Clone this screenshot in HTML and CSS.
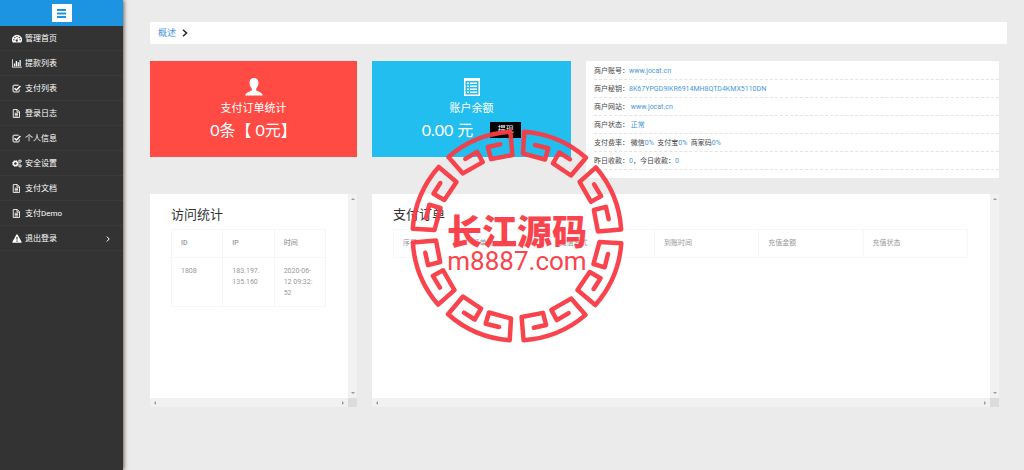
FILE: index.html
```html
<!DOCTYPE html>
<html lang="zh-CN">
<head>
<meta charset="utf-8">
<title>管理首页</title>
<link rel="stylesheet" href="styles.css">
</head>
<body>
<svg class="defs" aria-hidden="true">
  <symbol id="i-dash" viewBox="0 0 16 14"><path fill-rule="evenodd" d="M8 1a8 8 0 0 0-6.700 12.400h13.400A8 8 0 0 0 8 1zM3 7.800a1.100 1.100 0 1 1 0 2.200 1.100 1.100 0 0 1 0-2.200zM4.600 4.200a1.100 1.100 0 1 1 0 2.200 1.100 1.100 0 0 1 0-2.200zM8 2.700a1.100 1.100 0 1 1 0 2.200 1.100 1.100 0 0 1 0-2.200zM11.800 4.200a1.100 1.100 0 1 1 0 2.200 1.100 1.100 0 0 1 0-2.200zM13 7.800a1.100 1.100 0 1 1 0 2.200 1.100 1.100 0 0 1 0-2.200zM9.200 5.500l-.7 3.500a1.700 1.700 0 1 1-1.100-.3z"/></symbol>
  <symbol id="i-chart" viewBox="0 0 16 14"><path d="M0 0h1.200v12.300H16v1.200H0zM3 7h2v4.300H3zM6 3h2v8.300H6zM9 5h2v6.300H9zM12 1.500h2v9.800h-2z"/></symbol>
  <symbol id="i-check" viewBox="0 0 16 14"><path d="M11.500 8.500v2.700a1.300 1.300 0 0 1-1.300 1.300H3a1.300 1.300 0 0 1-1.300-1.300V3A1.300 1.300 0 0 1 3 1.700h7.500" fill="none" stroke="currentColor" stroke-width="1.600"/><path d="M4 6.500l3 3 6.500-6.500" fill="none" stroke="currentColor" stroke-width="2.400"/></symbol>
  <symbol id="i-file" viewBox="0 0 16 14"><path d="M2 .7h6.500L12 4.200v9.100H2zM8 .7v4h4M4.300 6.500h5.400M4.300 8.700h5.400M4.300 10.900h5.400" fill="none" stroke="currentColor" stroke-width="1.400"/></symbol>
  <symbol id="i-cogs" viewBox="0 0 16 14"><g fill="none" stroke="currentColor"><circle cx="5.500" cy="7" r="3.200" stroke-width="2.400"/><circle cx="5.500" cy="7" r="4.800" stroke-width="1.400" stroke-dasharray="1.900 1.870"/><circle cx="12.700" cy="3.400" r="1.700" stroke-width="1.400"/><circle cx="12.700" cy="3.400" r="2.700" stroke-width="1" stroke-dasharray="1.200 1.620"/><circle cx="12.700" cy="10.700" r="1.700" stroke-width="1.400"/><circle cx="12.700" cy="10.700" r="2.700" stroke-width="1" stroke-dasharray="1.200 1.620"/></g></symbol>
  <symbol id="i-warn" viewBox="0 0 16 14"><path fill-rule="evenodd" d="M7.100.6a1 1 0 0 1 1.800 0l6.400 11.700a1 1 0 0 1-.9 1.500H1.600a1 1 0 0 1-.9-1.500zM7 4.500l.3 4.500h1.400L9 4.500zM7 10.100v1.900h2v-1.900z"/></symbol>
</svg>
<div class="app">
  <aside class="sidebar">
    <div class="brand"><button class="toggle" type="button" aria-label="菜单"><svg viewBox="0 0 9 9"><path d="M0 0h9v2H0zM0 3.500h9v2H0zM0 7h9v2H0z"/></svg></button></div>
    <nav class="menu">
      <a href="#"><svg><use href="#i-dash"/></svg>管理首页</a>
      <a href="#"><svg><use href="#i-chart"/></svg>提款列表</a>
      <a href="#"><svg><use href="#i-check"/></svg>支付列表</a>
      <a href="#"><svg><use href="#i-file"/></svg>登录日志</a>
      <a href="#"><svg><use href="#i-check"/></svg>个人信息</a>
      <a href="#"><svg><use href="#i-cogs"/></svg>安全设置</a>
      <a href="#"><svg><use href="#i-file"/></svg>支付文档</a>
      <a href="#"><svg><use href="#i-file"/></svg>支付Demo</a>
      <a href="#"><svg><use href="#i-warn"/></svg>退出登录<svg class="caret" viewBox="0 0 4 6"><path d="M.8.5 3.200 3 .8 5.500"/></svg></a>
    </nav>
  </aside>
  <main class="main">
    <div class="crumb"><a href="#">概述</a><svg viewBox="0 0 6 8"><path d="M1 .7 4.500 4 1 7.300"/></svg></div>
    <div class="grid">
      <section class="card red">
        <svg class="big" viewBox="0 0 18 18"><path d="M9 0c2.800 0 4.500 1.900 4.500 4.800 0 2.400-1 4.600-2.300 5.700v1.700c.3 1 6.600 2 6.600 5.300H.2c0-3.300 6.300-4.300 6.600-5.300v-1.700C5.500 9.400 4.500 7.200 4.500 4.800 4.500 1.900 6.200 0 9 0z"/></svg>
        <h3>支付订单统计</h3>
        <p>0条【 0元】</p>
      </section>
      <section class="card blue">
        <svg class="big" viewBox="0 0 18 18"><path fill-rule="evenodd" d="M1 0h16v18H1zM2.500 3v13.500h13V3zM4 4.500h2V6H4zM7 4.500h7V6H7zM4 7.500h2V9H4zM7 7.500h7V9H7zM4 10.500h2V12H4zM7 10.500h7V12H7zM4 13.500h2V15H4zM7 13.500h7V15H7z"/></svg>
        <h3>账户余额</h3>
        <p>0.00 元<button type="button">提现</button></p>
      </section>
      <section class="info">
        <div>商户账号：<a href="#">www.jocat.cn</a></div>
        <div>商户秘钥：<a href="#">8K67YPGD9IKR6914MH8QTD4KMX5110DN</a></div>
        <div>商户网站：&nbsp;<a href="#">www.jocat.cn</a></div>
        <div>商户状态：&nbsp;<b>正常</b></div>
        <div>支付费率：&nbsp;微信<b>0%</b>&nbsp; 支付宝<b>0%</b>&nbsp; 商家码<b>0%</b></div>
        <div>昨日收款：<b>0</b>，今日收款：<b>0</b></div>
      </section>
      <section class="panel">
        <div class="content">
          <h2>访问统计</h2>
          <table class="visits">
            <thead><tr><th>ID</th><th>IP</th><th>时间</th></tr></thead>
            <tbody><tr><td>1808</td><td>183.197.<br>135.160</td><td>2020-06-<br>12 09:32:<br>52</td></tr></tbody>
          </table>
        </div>
        <div class="vbar"><i class="up"></i><i class="down"></i></div>
        <div class="hbar"><i class="left"></i><i class="right"></i></div>
        <div class="corner"></div>
      </section>
      <section class="panel wide">
        <div class="content">
          <h2>支付订单</h2>
          <table class="orders">
            <colgroup><col class="c1"><col class="c2"><col class="c3"><col class="c4"><col class="c4"><col class="c4"></colgroup>
            <thead><tr><th>序号</th><th>订单号</th><th>充值方式</th><th>到账时间</th><th>充值金额</th><th>充值状态</th></tr></thead>
          </table>
        </div>
        <div class="vbar"><i class="up"></i><i class="down"></i></div>
        <div class="hbar"><i class="left"></i><i class="right"></i></div>
        <div class="corner"></div>
      </section>
    </div>
  </main>
</div>
<div class="stamp">
  <svg viewBox="-108 -108 216 216">
    <path id="seg" d="M18-91 31.300-87.700 28-76.500 6-82.500 7.300-104.300A104.600 104.600 0 0 1 69-78.300L54-60.500 36-72.700 42.300-83.500 53-76.700"/>
    <use href="#seg" transform="rotate(45)"/><use href="#seg" transform="rotate(90)"/><use href="#seg" transform="rotate(135)"/><use href="#seg" transform="rotate(180)"/><use href="#seg" transform="rotate(225)"/><use href="#seg" transform="rotate(270)"/><use href="#seg" transform="rotate(315)"/>
  </svg>
  <div class="words"><strong>长江源码</strong><span>m8887.com</span></div>
</div>
</body>
</html>
```
FILE: styles.css
```css
* { box-sizing: border-box; }
body { margin: 0; background: #ebebeb; color: #444; font: 8px/11px Roboto, "Noto Sans CJK SC", sans-serif; }
a { color: #4a98dc; text-decoration: none; }
h2, h3, p { margin: 0; font-weight: 400; }
.defs { display: none; }
.app { display: flex; min-height: 100vh; }

.sidebar { flex: 0 0 123px; background: #333; box-shadow: 1px 0 4px #6b5a55; }
.brand { display: flex; justify-content: center; align-items: center; height: 26px; background: #1c94e2; }
.toggle { display: grid; place-items: center; width: 20px; height: 18px; padding: 0; border: 0; background: #fff; }
.toggle svg { width: 9px; height: 9px; fill: #1c94e2; }
.menu a { display: flex; align-items: center; height: 25px; padding: 1px 13px 0 12px; border-bottom: 1px solid #3a3a3a; color: #fff; }
.menu svg { width: 10px; height: 9px; margin-right: 3px; fill: currentColor; }
.menu .caret { width: 4px; height: 6px; margin: 0 0 0 auto; fill: none; stroke: #fff; }

.main { flex: 1; padding: 22px 17px 0 27px; }
.crumb { display: flex; align-items: center; gap: 6px; height: 22px; padding: 0 8px; background: #fff; font-size: 9px; }
.crumb svg { width: 6px; height: 8px; fill: none; stroke: #222; stroke-width: 1.500; }
.grid { display: grid; grid-template-columns: 207fr 199fr 413fr; column-gap: 15px; row-gap: 16px; margin: 17px 8px 0 0; align-items: start; }

.card { display: flex; flex-direction: column; align-items: center; height: 96px; padding-top: 17px; color: #fff; }
.red { background: #ff4b44; }
.blue { background: #23bef0; }
.big { width: 18px; height: 18px; fill: #fff; }
.card h3 { margin-top: 5px; font-size: 11px; line-height: 16px; }
.card p { display: flex; align-items: center; margin-top: 1px; font: 16px/24px Lato, "Noto Sans CJK SC", sans-serif; }
.card button { width: 31px; height: 16px; margin-left: 17px; padding: 0; border: 0; background: #000; color: #fff; font: 8px/16px Roboto, "Noto Sans CJK SC", sans-serif; }

.info { padding: 1px 0 8px 8px; background: #fff; font-size: 7px; }
.info div { height: 18px; padding-top: 1px; line-height: 17px; border-bottom: 1px dashed #e4e4e4; }
.info b { color: #4a98dc; font-weight: 400; }

.panel { display: grid; grid-template: 1fr 9px / 1fr 9px; height: 213px; background: #fff; }
.wide { grid-column: span 2; }
.content { padding: 12px 22px 0 21px; overflow: hidden; }
.content h2 { font-size: 13px; line-height: 18px; color: #333; }
table { width: 100%; margin-top: 5px; border-collapse: collapse; table-layout: fixed; color: #999; }
th, td { padding: 8px 0 7px 9px; border: 1px solid #f6f6f6; text-align: left; vertical-align: top; font-size: 7px; }
th { height: 28px; font-weight: 400; }
.visits th { font-weight: 500; }
.c1 { width: 12%; }
.c2 { width: 15%; }
.c3 { width: 18%; }
.c4 { width: 18%; }
.vbar, .hbar { display: flex; justify-content: space-between; align-items: center; background: #f1f1f1; }
.vbar { flex-direction: column; padding: 4px 0; }
.hbar { padding: 0 4px; }
.corner { background: #dcdcdc; }
.vbar i, .hbar i { border: 2px solid transparent; }
.vbar .up { border-top-width: 0; border-bottom-color: #999; }
.vbar .down { border-bottom-width: 0; border-top-color: #999; }
.hbar .left { border-left-width: 0; border-right-color: #999; }
.hbar .right { border-right-width: 0; border-left-color: #999; }

.stamp { position: absolute; left: 409px; top: 128px; width: 216px; height: 216px; display: grid; place-items: center; color: #fa3b44; pointer-events: none; opacity: .95; }
.stamp > * { grid-area: 1 / 1; }
.stamp svg { width: 216px; height: 216px; fill: none; stroke: #fa3b44; stroke-width: 4.500; stroke-linejoin: round; stroke-linecap: round; }
.words { display: flex; flex-direction: column; align-items: center; padding-top: 14px; }
.words strong { font: 900 35px/36px "Noto Sans CJK SC", sans-serif; }
.words span { font: 400 26px/26px Roboto, sans-serif; }
```
